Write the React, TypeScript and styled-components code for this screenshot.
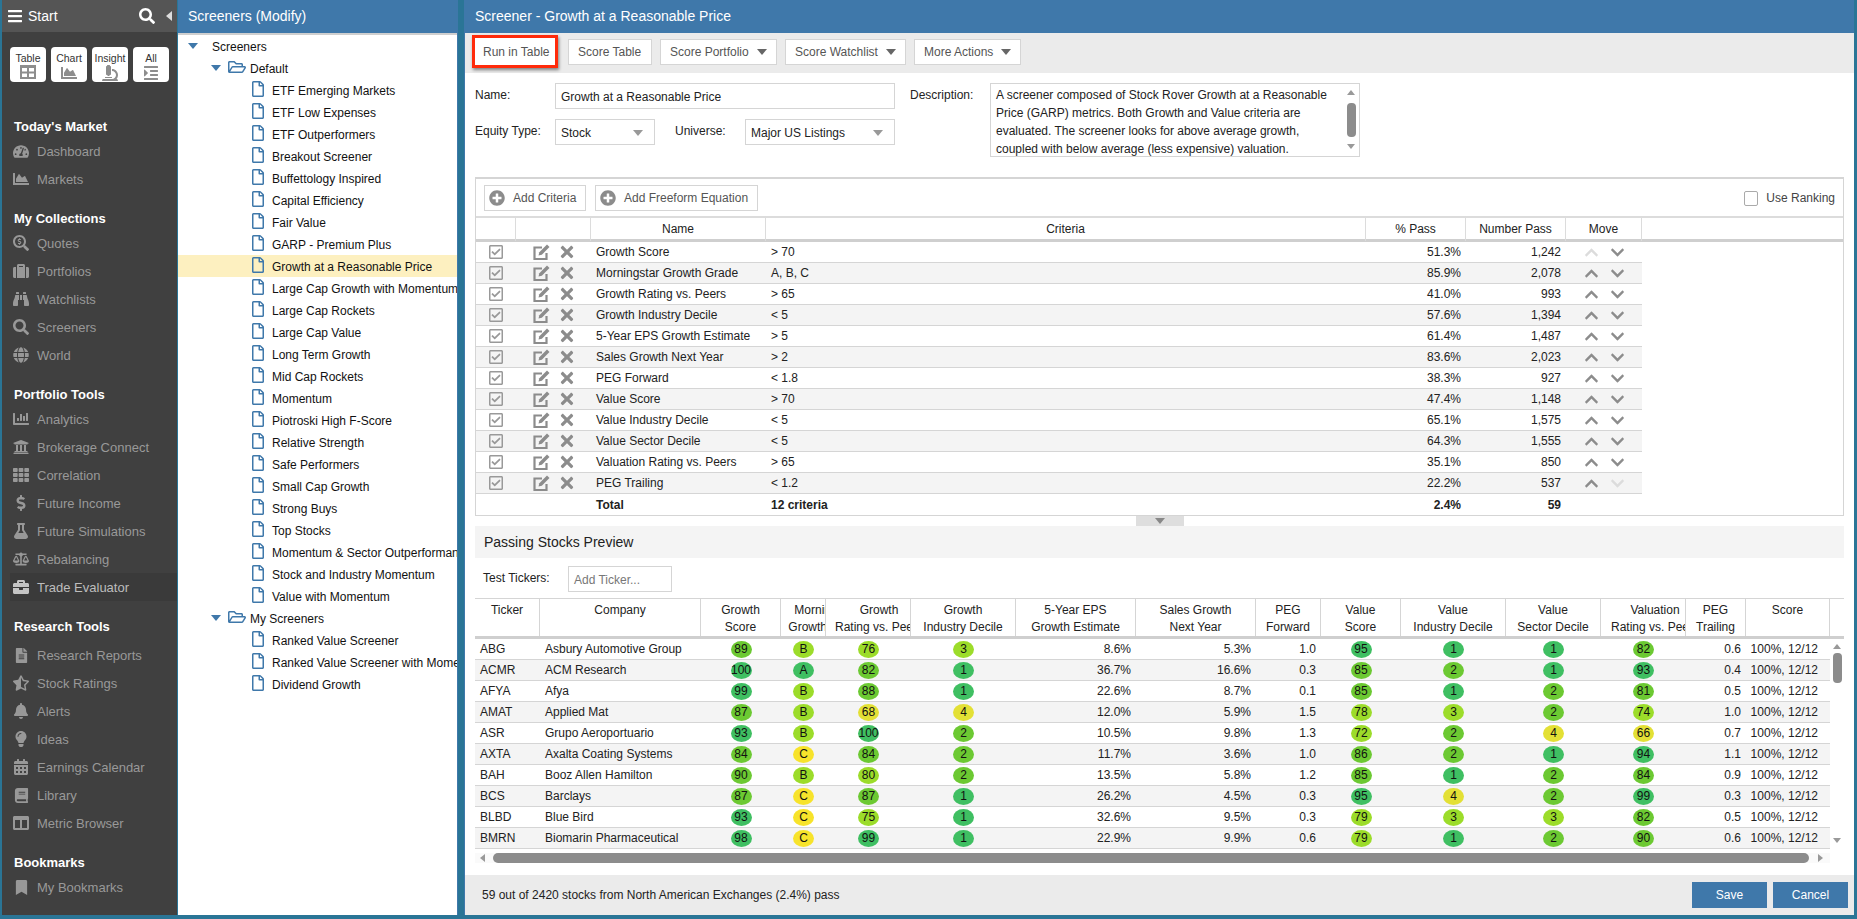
import React from "react";
import styled, { createGlobalStyle } from "styled-components";
import {
  FaBalanceScale,
  FaBars,
  FaBell,
  FaBinoculars,
  FaBook,
  FaBookmark,
  FaBriefcase,
  FaCalendarAlt,
  FaChartArea,
  FaChartBar,
  FaChevronDown,
  FaChevronUp,
  FaColumns,
  FaDollarSign,
  FaFileAlt,
  FaFlask,
  FaGlobe,
  FaIndent,
  FaLightbulb,
  FaMicroscope,
  FaPlusCircle,
  FaRegCheckSquare,
  FaRegFile,
  FaRegFolderOpen,
  FaSearch,
  FaSearchDollar,
  FaStarHalfAlt,
  FaSuitcase,
  FaTachometerAlt,
  FaTh,
  FaTimes,
  FaUniversity,
} from "react-icons/fa";

const BLUE = "#3f78aa";
const TEAL = "#2a7596";
const FONT = `"Liberation Sans", Arial, sans-serif`;

const GlobalStyle = createGlobalStyle`
  html, body {
    margin: 0;
    padding: 0;
    height: 100%;
    overflow: hidden;
  }
  body {
    font-family: ${FONT};
    font-size: 12px;
    color: #222;
    background: ${TEAL};
  }
  * {
    box-sizing: border-box;
  }
`;

const Page = styled.div`
  width: 1857px;
  height: 919px;
  padding: 0 3px 4px 2px;
  background: ${TEAL};
  display: flex;
`;

/* ---------- left navigation ---------- */

const Sidebar = styled.nav`
  width: 175px;
  flex: none;
  background: #404040;
  display: flex;
  flex-direction: column;
  overflow: hidden;
`;

const StartBar = styled.div`
  height: 32px;
  flex: none;
  background: #555555;
  color: #fff;
  display: flex;
  align-items: center;
  padding: 0 5px;
  font-size: 14px;
  svg {
    display: block;
  }
`;

const StartLabel = styled.span`
  margin-left: 5px;
  flex: 1;
`;

const LeftCaret = styled.span`
  width: 0;
  height: 0;
  margin-left: 11px;
  border-top: 5px solid transparent;
  border-bottom: 5px solid transparent;
  border-right: 6px solid #ddd;
`;

const TileRow = styled.div`
  display: flex;
  flex: none;
  gap: 5px;
  padding: 15px 8px 0;
  margin-bottom: 35px;
`;

const Tile = styled.div`
  width: 36px;
  height: 35px;
  background: #fff;
  border-radius: 4px;
  color: #333;
  font-size: 10.5px;
  display: flex;
  flex-direction: column;
  align-items: center;
  padding-top: 5px;
  svg {
    color: #8d8d8d;
    margin-top: 1px;
  }
`;

const NavGroup = styled.div`
  flex: none;
  margin-bottom: 16px;
`;

const NavHeading = styled.div<{ $gap: number }>`
  height: 19px;
  line-height: 19px;
  padding-left: 12px;
  margin-bottom: ${(props) => props.$gap}px;
  font-size: 13px;
  font-weight: 700;
  color: #fff;
`;

const NavItem = styled.div<{ $active?: boolean }>`
  height: 28px;
  display: flex;
  align-items: center;
  margin-left: 8px;
  padding-left: 3px;
  font-size: 13px;
  color: ${(props) => (props.$active ? "#bdbdbd" : "#999")};
  background: ${(props) => (props.$active ? "#3a3a3a" : "transparent")};
`;

const NavIcon = styled.span`
  width: 16px;
  margin-right: 8px;
  display: flex;
  justify-content: center;
  flex: none;
`;

/* ---------- tree panel ---------- */

const TreePanel = styled.aside`
  width: 280px;
  flex: none;
  margin-left: 1px;
  background: #fff;
  border-right: 1px solid ${BLUE};
  overflow: hidden;
`;

const PanelTitle = styled.div`
  height: 33px;
  background: ${BLUE};
  color: #fff;
  font-size: 14px;
  line-height: 33px;
  padding-left: 10px;
`;

const PanelRule = styled.div`
  height: 2px;
  background: #cfcfcf;
`;

const TreeRow = styled.div<{ $depth: number; $selected?: boolean }>`
  height: 22px;
  display: flex;
  align-items: center;
  white-space: nowrap;
  font-size: 12px;
  color: #111;
  padding: 2px 0 0 ${(props) => props.$depth}px;
  background: ${(props) => (props.$selected ? "#fdf0c0" : "transparent")};
`;

const TreeCaret = styled.span`
  width: 0;
  height: 0;
  flex: none;
  margin-top: -2px;
  border-left: 5px solid transparent;
  border-right: 5px solid transparent;
  border-top: 6px solid ${BLUE};
`;

const RootLabel = styled.span`
  margin-left: 14px;
`;

const FolderIcon = styled(FaRegFolderOpen)`
  color: ${BLUE};
  margin: -4px 4px 0 7px;
  flex: none;
`;

const FileIcon = styled(FaRegFile)`
  color: ${BLUE};
  margin: -4px 6px 0 -2px;
  flex: none;
`;

/* ---------- main panel ---------- */

const Main = styled.main`
  width: 1390px;
  flex: none;
  margin-left: 6px;
  background: #fff;
  border-left: 1px solid ${BLUE};
  display: flex;
  flex-direction: column;
`;

const MainTitle = styled.div`
  height: 33px;
  background: ${BLUE};
  color: #fff;
  font-size: 14px;
  line-height: 33px;
  padding-left: 10px;
`;

const ActionBar = styled.div`
  height: 40px;
  background: #ebebeb;
  display: flex;
  align-items: flex-start;
  gap: 8px;
  padding: 6px 0 0 7px;
`;

const ActionButton = styled.div<{ $w: number; $marked?: boolean }>`
  width: ${(props) => props.$w}px;
  height: 26px;
  background: #fff;
  border: 1px solid #d5d5d5;
  color: #555;
  font-size: 12px;
  white-space: nowrap;
  display: flex;
  align-items: center;
  justify-content: space-between;
  padding: 0 9px;
  ${(props) =>
    props.$marked &&
    `
    height: 33px;
    margin: -4px 2px 0 0;
    border: 3px solid #ff2a0a;
    box-shadow: 1px 2px 3px rgba(0,0,0,.45);
    padding: 0 8px;
  `}
`;

const DownTriangle = styled.span<{ $color?: string }>`
  width: 0;
  height: 0;
  flex: none;
  border-left: 5px solid transparent;
  border-right: 5px solid transparent;
  border-top: 6px solid ${(props) => props.$color || "#666"};
`;

const SelectCaret = styled(DownTriangle)`
  margin-right: 6px;
`;

const FormGrid = styled.div`
  height: 74px;
  margin: 10px 0 20px 10px;
  display: flex;
`;

const FormLeft = styled.div`
  width: 420px;
  display: flex;
  flex-direction: column;
  gap: 10px;
`;

const FormLine = styled.div`
  display: flex;
  align-items: flex-start;
`;

const FieldLabel = styled.label<{ $w: number }>`
  width: ${(props) => props.$w}px;
  flex: none;
  font-size: 12px;
  line-height: 25px;
  color: #222;
`;

const UniverseLabel = styled(FieldLabel)`
  margin-left: 20px;
`;

const DescriptionLabel = styled(FieldLabel)`
  margin-left: 15px;
`;

const TextField = styled.div<{ $w: number }>`
  width: ${(props) => props.$w}px;
  height: 26px;
  border: 1px solid #d5d5d5;
  background: #fff;
  padding: 1px 5px 0;
  font-size: 12px;
  color: #222;
  display: flex;
  align-items: center;
  justify-content: space-between;
`;

const DescriptionBox = styled.div`
  width: 370px;
  height: 74px;
  border: 1px solid #d5d5d5;
  display: flex;
  font-size: 12px;
  line-height: 18px;
  padding: 2px 0 0 5px;
  overflow: hidden;
`;

const DescriptionText = styled.div`
  flex: 1;
  padding-right: 8px;
`;

const DescScroll = styled.div`
  width: 12px;
  flex: none;
  display: flex;
  flex-direction: column;
  align-items: center;
  justify-content: space-between;
  margin: 4px 2px 7px 0;
`;

const ScrollThumb = styled.div<{ $h: number }>`
  width: 9px;
  height: ${(props) => props.$h}px;
  background: #8c8c8c;
  border-radius: 4px;
`;

const UpArrow = styled.span`
  width: 0;
  height: 0;
  border-left: 4.5px solid transparent;
  border-right: 4.5px solid transparent;
  border-bottom: 5px solid #999;
`;

const DownArrow = styled.span`
  width: 0;
  height: 0;
  border-left: 4.5px solid transparent;
  border-right: 4.5px solid transparent;
  border-top: 5px solid #999;
`;

const CriteriaBox = styled.section`
  margin-left: 10px;
  width: 1369px;
  height: 339px;
  flex: none;
  border: 1px solid #d5d5d5;
  border-top-width: 2px;
`;

const CriteriaTools = styled.div`
  height: 39px;
  display: flex;
  align-items: center;
  gap: 9px;
  padding: 1px 8px 0;
  border-bottom: 2px solid #dcdcdc;
`;

const AddButton = styled.div<{ $w: number }>`
  width: ${(props) => props.$w}px;
  height: 26px;
  border: 1px solid #d5d5d5;
  color: #555;
  font-size: 12px;
  display: flex;
  align-items: center;
  gap: 8px;
  padding-left: 4px;
  svg {
    color: #8c8c8c;
  }
`;

const RankingToggle = styled.div`
  margin-left: auto;
  display: flex;
  align-items: center;
  gap: 8px;
  font-size: 12px;
  color: #444;
`;

const CheckBox = styled.span`
  width: 14px;
  height: 15px;
  border: 1px solid #aaa;
  border-radius: 2px;
`;

const CRITERIA_COLUMNS = "40px 75px 175px 600px 100px 100px 76px";

const CriteriaHead = styled.div`
  display: grid;
  grid-template-columns: ${CRITERIA_COLUMNS} 1fr;
  height: 24px;
  border-bottom: 3px solid #cfcfcf;
`;

const CriteriaHeadCell = styled.div`
  border-right: 1px solid #dcdcdc;
  text-align: center;
  font-size: 12px;
  line-height: 23px;
  color: #222;
  &:last-child {
    border-right: 0;
  }
`;

const CriteriaRow = styled.div<{ $shade?: boolean }>`
  display: grid;
  grid-template-columns: ${CRITERIA_COLUMNS};
  width: 1166px;
  height: 21px;
  align-items: center;
  font-size: 12px;
  color: #222;
  border-bottom: 1px solid #d5d5d5;
  background: ${(props) => (props.$shade ? "#f4f4f4" : "#fff")};
`;

const TotalRow = styled(CriteriaRow)`
  border-bottom: 0;
  font-weight: 700;
`;

const CheckCell = styled.div`
  padding-left: 12px;
  display: flex;
  color: #999;
`;

const EditCell = styled.div`
  padding-left: 17px;
  display: flex;
  align-items: center;
  gap: 7px;
  color: #8c8c8c;
`;

const NameCell = styled.div`
  padding-left: 5px;
`;

const NumCell = styled.div`
  text-align: right;
  padding-right: 5px;
`;

const MoveCell = styled.div`
  display: flex;
  align-items: center;
  gap: 11px;
  padding-left: 18px;
`;

const Chevron = styled.span<{ $off?: boolean }>`
  display: flex;
  color: ${(props) => (props.$off ? "#dcdcdc" : "#8c8c8c")};
`;

const Splitter = styled.div`
  height: 10px;
  display: flex;
  justify-content: center;
`;

const SplitHandle = styled.div`
  width: 48px;
  height: 10px;
  background: #dedede;
  display: flex;
  align-items: center;
  justify-content: center;
`;

const PreviewTitle = styled.div`
  margin-left: 10px;
  width: 1369px;
  height: 32px;
  flex: none;
  background: #f4f4f4;
  padding-left: 9px;
  font-size: 14px;
  line-height: 32px;
  color: #222;
`;

const TickerLine = styled.div`
  height: 40px;
  flex: none;
  margin-left: 18px;
  display: flex;
  align-items: flex-start;
  padding-top: 8px;
`;

const TickerInput = styled.div`
  width: 104px;
  height: 26px;
  border: 1px solid #d5d5d5;
  padding-left: 5px;
  font-size: 12px;
  line-height: 26px;
  color: #777;
`;

const PREVIEW_COLUMNS =
  "65px 161px 80px 45px 85px 105px 120px 120px 65px 80px 105px 95px 85px 60px 84px";

const PreviewHead = styled.div`
  margin-left: 10px;
  width: 1369px;
  display: grid;
  grid-template-columns: ${PREVIEW_COLUMNS} 1fr;
  height: 41px;
  flex: none;
  border-top: 1px solid #d5d5d5;
  border-bottom: 3px solid #cfcfcf;
`;

const PreviewHeadCell = styled.div`
  border-right: 1px solid #d5d5d5;
  overflow: hidden;
  &:last-child {
    border-right: 0;
  }
`;

const HeadLabel = styled.div<{ $w?: number }>`
  width: ${(props) => (props.$w ? `${props.$w}px` : "100%")};
  text-align: center;
  font-size: 12px;
  line-height: 17px;
  padding-top: 3px;
  white-space: nowrap;
  color: #222;
`;

const PreviewBody = styled.div`
  margin-left: 10px;
  width: 1369px;
  display: flex;
  flex: none;
`;

const RowStack = styled.div`
  width: 1355px;
`;

const StockRow = styled.div<{ $shade?: boolean }>`
  display: grid;
  grid-template-columns: ${PREVIEW_COLUMNS};
  height: 21px;
  align-items: center;
  font-size: 12px;
  color: #222;
  border-bottom: 1px solid #d5d5d5;
  background: ${(props) => (props.$shade ? "#f4f4f4" : "#fff")};
`;

const TickerCell = styled.div`
  padding-left: 5px;
`;

const CompanyCell = styled.div`
  padding-left: 5px;
  white-space: nowrap;
`;

const BallCell = styled.div`
  display: flex;
  justify-content: center;
`;

const Ball = styled.span<{ $color: string }>`
  width: 21px;
  height: 17px;
  border-radius: 50%;
  background: ${(props) => props.$color};
  color: #111;
  font-size: 12px;
  line-height: 17px;
  text-align: center;
`;

const StockScore = styled.div`
  text-align: right;
  padding-right: 12px;
  white-space: nowrap;
`;

const VScroll = styled.div`
  width: 14px;
  height: 210px;
  display: flex;
  flex-direction: column;
  align-items: center;
  padding: 5px 0 6px;
`;

const VThumb = styled(ScrollThumb)`
  margin-top: 4px;
  margin-bottom: auto;
`;

const HScroll = styled.div`
  margin: 4px 0 0 10px;
  width: 1355px;
  height: 10px;
  flex: none;
  display: flex;
  align-items: center;
  background: #fafafa;
  padding: 0 7px 0 5px;
`;

const HThumb = styled.div`
  flex: 1;
  height: 10px;
  background: #8c8c8c;
  border-radius: 5px;
  margin: 0 9px 0 8px;
`;

const ArrowLeft = styled.span`
  width: 0;
  height: 0;
  border-top: 4px solid transparent;
  border-bottom: 4px solid transparent;
  border-right: 5px solid #999;
`;

const ArrowRight = styled.span`
  width: 0;
  height: 0;
  border-top: 4px solid transparent;
  border-bottom: 4px solid transparent;
  border-left: 5px solid #999;
`;

const Footer = styled.footer`
  margin-top: auto;
  height: 40px;
  background: #ebebeb;
  display: flex;
  align-items: center;
  padding: 0 6px 0 17px;
  font-size: 12px;
  color: #222;
`;

const FooterText = styled.span`
  flex: 1;
`;

const FooterButton = styled.div`
  width: 75px;
  height: 26px;
  margin-left: 6px;
  background: ${BLUE};
  color: #fff;
  font-size: 12px;
  line-height: 26px;
  text-align: center;
`;

/* ---------- drawn icons ---------- */

const TableGlyph = () => (
  <svg width="16" height="14" viewBox="0 0 16 14">
    <rect x="0" y="0" width="16" height="14" fill="currentColor" />
    <rect x="2" y="3" width="5" height="3.5" fill="#fff" />
    <rect x="9" y="3" width="5" height="3.5" fill="#fff" />
    <rect x="2" y="8.5" width="5" height="3.5" fill="#fff" />
    <rect x="9" y="8.5" width="5" height="3.5" fill="#fff" />
  </svg>
);

const EditGlyph = () => (
  <svg width="18" height="18" viewBox="0 0 18 18">
    <path d="M13.5 10v6H1.5V4.5H9" fill="none" stroke="currentColor" strokeWidth="2.2" />
    <path d="M5.5 12.5l.8-3.3L14 1.5l2.5 2.5-7.7 7.7z" fill="currentColor" />
  </svg>
);

/* ---------- data ---------- */

type NavEntry = { label: string; icon: React.ReactNode; active?: boolean };
type NavSection = { title: string; gap: number; items: NavEntry[] };

const navIcon = { color: "#989898" };

const navSections: NavSection[] = [
  {
    title: "Today's Market",
    gap: 1,
    items: [
      { label: "Dashboard", icon: <FaTachometerAlt {...navIcon} size={17} /> },
      { label: "Markets", icon: <FaChartArea {...navIcon} size={16} /> },
    ],
  },
  {
    title: "My Collections",
    gap: 1,
    items: [
      { label: "Quotes", icon: <FaSearchDollar {...navIcon} size={16} /> },
      { label: "Portfolios", icon: <FaSuitcase {...navIcon} size={16} /> },
      { label: "Watchlists", icon: <FaBinoculars {...navIcon} size={16} /> },
      { label: "Screeners", icon: <FaSearch {...navIcon} size={16} /> },
      { label: "World", icon: <FaGlobe {...navIcon} size={16} /> },
    ],
  },
  {
    title: "Portfolio Tools",
    gap: 1,
    items: [
      { label: "Analytics", icon: <FaChartBar {...navIcon} size={16} /> },
      { label: "Brokerage Connect", icon: <FaUniversity {...navIcon} size={16} /> },
      { label: "Correlation", icon: <FaTh {...navIcon} size={16} /> },
      { label: "Future Income", icon: <FaDollarSign {...navIcon} size={16} /> },
      { label: "Future Simulations", icon: <FaFlask {...navIcon} size={16} /> },
      { label: "Rebalancing", icon: <FaBalanceScale {...navIcon} size={18} /> },
      { label: "Trade Evaluator", icon: <FaBriefcase size={16} color="#c4c4c4" />, active: true },
    ],
  },
  {
    title: "Research Tools",
    gap: 5,
    items: [
      { label: "Research Reports", icon: <FaFileAlt {...navIcon} size={15} /> },
      { label: "Stock Ratings", icon: <FaStarHalfAlt {...navIcon} size={16} /> },
      { label: "Alerts", icon: <FaBell {...navIcon} size={16} /> },
      { label: "Ideas", icon: <FaLightbulb {...navIcon} size={16} /> },
      { label: "Earnings Calendar", icon: <FaCalendarAlt {...navIcon} size={16} /> },
      { label: "Library", icon: <FaBook {...navIcon} size={15} /> },
      { label: "Metric Browser", icon: <FaColumns {...navIcon} size={16} /> },
    ],
  },
  {
    title: "Bookmarks",
    gap: 1,
    items: [{ label: "My Bookmarks", icon: <FaBookmark {...navIcon} size={15} /> }],
  },
];

const defaultScreeners = [
  "ETF Emerging Markets",
  "ETF Low Expenses",
  "ETF Outperformers",
  "Breakout Screener",
  "Buffettology Inspired",
  "Capital Efficiency",
  "Fair Value",
  "GARP - Premium Plus",
  "Growth at a Reasonable Price",
  "Large Cap Growth with Momentum",
  "Large Cap Rockets",
  "Large Cap Value",
  "Long Term Growth",
  "Mid Cap Rockets",
  "Momentum",
  "Piotroski High F-Score",
  "Relative Strength",
  "Safe Performers",
  "Small Cap Growth",
  "Strong Buys",
  "Top Stocks",
  "Momentum & Sector Outperformance",
  "Stock and Industry Momentum",
  "Value with Momentum",
];

const myScreeners = ["Ranked Value Screener", "Ranked Value Screener with Momentum", "Dividend Growth"];

const criteria = [
  ["Growth Score", "> 70", "51.3%", "1,242"],
  ["Morningstar Growth Grade", "A, B, C", "85.9%", "2,078"],
  ["Growth Rating vs. Peers", "> 65", "41.0%", "993"],
  ["Growth Industry Decile", "< 5", "57.6%", "1,394"],
  ["5-Year EPS Growth Estimate", "> 5", "61.4%", "1,487"],
  ["Sales Growth Next Year", "> 2", "83.6%", "2,023"],
  ["PEG Forward", "< 1.8", "38.3%", "927"],
  ["Value Score", "> 70", "47.4%", "1,148"],
  ["Value Industry Decile", "< 5", "65.1%", "1,575"],
  ["Value Sector Decile", "< 5", "64.3%", "1,555"],
  ["Valuation Rating vs. Peers", "> 65", "35.1%", "850"],
  ["PEG Trailing", "< 1.2", "22.2%", "537"],
];

// the narrow columns keep a wider label that the column clips
const previewHeads: { top: string; bottom: string; labelWidth?: number }[] = [
  { top: "Ticker", bottom: "" },
  { top: "Company", bottom: "" },
  { top: "Growth", bottom: "Score" },
  { top: "Morningstar", bottom: "Growth Grade", labelWidth: 90 },
  { top: "Growth", bottom: "Rating vs. Peers", labelWidth: 106 },
  { top: "Growth", bottom: "Industry Decile" },
  { top: "5-Year EPS", bottom: "Growth Estimate" },
  { top: "Sales Growth", bottom: "Next Year" },
  { top: "PEG", bottom: "Forward" },
  { top: "Value", bottom: "Score" },
  { top: "Value", bottom: "Industry Decile" },
  { top: "Value", bottom: "Sector Decile" },
  { top: "Valuation", bottom: "Rating vs. Peers", labelWidth: 108 },
  { top: "PEG", bottom: "Trailing" },
  { top: "Score", bottom: "" },
  { top: "", bottom: "" },
];

type Stock = [string, string, number, string, number, number, string, string, string, number, number, number, number, string];

const stocks: Stock[] = [
  ["ABG", "Asbury Automotive Group", 89, "B", 76, 3, "8.6%", "5.3%", "1.0", 95, 1, 1, 82, "0.6"],
  ["ACMR", "ACM Research", 100, "A", 82, 1, "36.7%", "16.6%", "0.3", 85, 2, 1, 93, "0.4"],
  ["AFYA", "Afya", 99, "B", 88, 1, "22.6%", "8.7%", "0.1", 85, 1, 2, 81, "0.5"],
  ["AMAT", "Applied Mat", 87, "B", 68, 4, "12.0%", "5.9%", "1.5", 78, 3, 2, 74, "1.0"],
  ["ASR", "Grupo Aeroportuario", 93, "B", 100, 2, "10.5%", "9.8%", "1.3", 72, 2, 4, 66, "0.7"],
  ["AXTA", "Axalta Coating Systems", 84, "C", 84, 2, "11.7%", "3.6%", "1.0", 86, 2, 1, 94, "1.1"],
  ["BAH", "Booz Allen Hamilton", 90, "B", 80, 2, "13.5%", "5.8%", "1.2", 85, 1, 2, 84, "0.9"],
  ["BCS", "Barclays", 87, "C", 87, 1, "26.2%", "4.5%", "0.3", 95, 4, 2, 99, "0.3"],
  ["BLBD", "Blue Bird", 93, "C", 75, 1, "32.6%", "9.5%", "0.3", 79, 3, 3, 82, "0.5"],
  ["BMRN", "Biomarin Pharmaceutical", 98, "C", 99, 1, "22.9%", "9.9%", "0.6", 79, 1, 2, 90, "0.6"],
];

const DARK_GREEN = "#3fbf62";
const GREEN = "#6cc932";
const LIME = "#9cdc2a";
const OLIVE = "#e3e035";
const YELLOW = "#f7e32b";

const scoreColor = (score: number) => {
  if (score > 90) return DARK_GREEN;
  if (score > 80) return GREEN;
  if (score >= 70) return LIME;
  return OLIVE;
};

const decileColor = (decile: number) => [DARK_GREEN, GREEN, LIME, OLIVE][decile - 1];

const gradeColor = (grade: string) => (grade === "A" ? DARK_GREEN : grade === "B" ? LIME : YELLOW);

const App: React.FC = () => {
  return (
    <Page>
      <GlobalStyle />
      <Sidebar>
        <StartBar>
          <FaBars size={16} />
          <StartLabel>Start</StartLabel>
          <FaSearch size={16} />
          <LeftCaret />
        </StartBar>
        <TileRow>
          <Tile>
            Table
            <TableGlyph />
          </Tile>
          <Tile>
            Chart
            <FaChartArea size={16} />
          </Tile>
          <Tile>
            Insight
            <FaMicroscope size={16} />
          </Tile>
          <Tile>
            All
            <FaIndent size={16} />
          </Tile>
        </TileRow>
        {navSections.map((section) => (
          <NavGroup key={section.title}>
            <NavHeading $gap={section.gap}>{section.title}</NavHeading>
            {section.items.map((item) => (
              <NavItem key={item.label} $active={item.active}>
                <NavIcon>{item.icon}</NavIcon>
                {item.label}
              </NavItem>
            ))}
          </NavGroup>
        ))}
      </Sidebar>

      <TreePanel>
        <PanelTitle>Screeners (Modify)</PanelTitle>
        <PanelRule />
        <TreeRow $depth={10}>
          <TreeCaret />
          <RootLabel>Screeners</RootLabel>
        </TreeRow>
        <TreeRow $depth={33}>
          <TreeCaret />
          <FolderIcon size={18} />
          Default
        </TreeRow>
        {defaultScreeners.map((name) => (
          <TreeRow key={name} $depth={74} $selected={name === "Growth at a Reasonable Price"}>
            <FileIcon size={16} />
            {name}
          </TreeRow>
        ))}
        <TreeRow $depth={33}>
          <TreeCaret />
          <FolderIcon size={18} />
          My Screeners
        </TreeRow>
        {myScreeners.map((name) => (
          <TreeRow key={name} $depth={74}>
            <FileIcon size={16} />
            {name}
          </TreeRow>
        ))}
      </TreePanel>

      <Main>
        <MainTitle>Screener - Growth at a Reasonable Price</MainTitle>
        <ActionBar>
          <ActionButton $w={86} $marked>
            Run in Table
          </ActionButton>
          <ActionButton $w={84}>Score Table</ActionButton>
          <ActionButton $w={117}>
            Score Portfolio <DownTriangle />
          </ActionButton>
          <ActionButton $w={121}>
            Score Watchlist <DownTriangle />
          </ActionButton>
          <ActionButton $w={107}>
            More Actions <DownTriangle />
          </ActionButton>
        </ActionBar>

        <FormGrid>
          <FormLeft>
            <FormLine>
              <FieldLabel $w={80}>Name:</FieldLabel>
              <TextField $w={340}>Growth at a Reasonable Price</TextField>
            </FormLine>
            <FormLine>
              <FieldLabel $w={80}>Equity Type:</FieldLabel>
              <TextField $w={100}>
                Stock <SelectCaret $color="#999" />
              </TextField>
              <UniverseLabel $w={70}>Universe:</UniverseLabel>
              <TextField $w={150}>
                Major US Listings <SelectCaret $color="#999" />
              </TextField>
            </FormLine>
          </FormLeft>
          <DescriptionLabel $w={80}>Description:</DescriptionLabel>
          <DescriptionBox>
            <DescriptionText>
              A screener composed of Stock Rover Growth at a Reasonable Price (GARP) metrics. Both Growth and Value
              criteria are evaluated. The screener looks for above average growth, coupled with below average (less
              expensive) valuation.
            </DescriptionText>
            <DescScroll>
              <UpArrow />
              <ScrollThumb $h={34} />
              <DownArrow />
            </DescScroll>
          </DescriptionBox>
        </FormGrid>

        <CriteriaBox>
          <CriteriaTools>
            <AddButton $w={102}>
              <FaPlusCircle size={16} /> Add Criteria
            </AddButton>
            <AddButton $w={163}>
              <FaPlusCircle size={16} /> Add Freeform Equation
            </AddButton>
            <RankingToggle>
              <CheckBox />
              Use Ranking
            </RankingToggle>
          </CriteriaTools>
          <CriteriaHead>
            <CriteriaHeadCell />
            <CriteriaHeadCell />
            <CriteriaHeadCell>Name</CriteriaHeadCell>
            <CriteriaHeadCell>Criteria</CriteriaHeadCell>
            <CriteriaHeadCell>% Pass</CriteriaHeadCell>
            <CriteriaHeadCell>Number Pass</CriteriaHeadCell>
            <CriteriaHeadCell>Move</CriteriaHeadCell>
            <CriteriaHeadCell />
          </CriteriaHead>
          {criteria.map(([name, rule, pass, count], i) => (
            <CriteriaRow key={name} $shade={i % 2 === 1}>
              <CheckCell>
                <FaRegCheckSquare size={16} />
              </CheckCell>
              <EditCell>
                <EditGlyph />
                <FaTimes size={18} />
              </EditCell>
              <NameCell>{name}</NameCell>
              <NameCell>{rule}</NameCell>
              <NumCell>{pass}</NumCell>
              <NumCell>{count}</NumCell>
              <MoveCell>
                <Chevron $off={i === 0}>
                  <FaChevronUp size={15} />
                </Chevron>
                <Chevron $off={i === criteria.length - 1}>
                  <FaChevronDown size={15} />
                </Chevron>
              </MoveCell>
            </CriteriaRow>
          ))}
          <TotalRow>
            <div />
            <div />
            <NameCell>Total</NameCell>
            <NameCell>12 criteria</NameCell>
            <NumCell>2.4%</NumCell>
            <NumCell>59</NumCell>
          </TotalRow>
        </CriteriaBox>

        <Splitter>
          <SplitHandle>
            <DownTriangle $color="#888" />
          </SplitHandle>
        </Splitter>
        <PreviewTitle>Passing Stocks Preview</PreviewTitle>
        <TickerLine>
          <FieldLabel $w={85}>Test Tickers:</FieldLabel>
          <TickerInput>Add Ticker...</TickerInput>
        </TickerLine>
        <PreviewHead>
          {previewHeads.map((head, i) => (
            <PreviewHeadCell key={i}>
              <HeadLabel $w={head.labelWidth}>
                {head.top}
                <br />
                {head.bottom}
              </HeadLabel>
            </PreviewHeadCell>
          ))}
        </PreviewHead>
        <PreviewBody>
          <RowStack>
            {stocks.map((s, i) => (
              <StockRow key={s[0]} $shade={i % 2 === 1}>
                <TickerCell>{s[0]}</TickerCell>
                <CompanyCell>{s[1]}</CompanyCell>
                <BallCell>
                  <Ball $color={scoreColor(s[2])}>{s[2]}</Ball>
                </BallCell>
                <BallCell>
                  <Ball $color={gradeColor(s[3])}>{s[3]}</Ball>
                </BallCell>
                <BallCell>
                  <Ball $color={scoreColor(s[4])}>{s[4]}</Ball>
                </BallCell>
                <BallCell>
                  <Ball $color={decileColor(s[5])}>{s[5]}</Ball>
                </BallCell>
                <NumCell>{s[6]}</NumCell>
                <NumCell>{s[7]}</NumCell>
                <NumCell>{s[8]}</NumCell>
                <BallCell>
                  <Ball $color={scoreColor(s[9])}>{s[9]}</Ball>
                </BallCell>
                <BallCell>
                  <Ball $color={decileColor(s[10])}>{s[10]}</Ball>
                </BallCell>
                <BallCell>
                  <Ball $color={decileColor(s[11])}>{s[11]}</Ball>
                </BallCell>
                <BallCell>
                  <Ball $color={scoreColor(s[12])}>{s[12]}</Ball>
                </BallCell>
                <NumCell>{s[13]}</NumCell>
                <StockScore>100%, 12/12</StockScore>
              </StockRow>
            ))}
          </RowStack>
          <VScroll>
            <UpArrow />
            <VThumb $h={30} />
            <DownArrow />
          </VScroll>
        </PreviewBody>
        <HScroll>
          <ArrowLeft />
          <HThumb />
          <ArrowRight />
        </HScroll>
        <Footer>
          <FooterText>59 out of 2420 stocks from North American Exchanges (2.4%) pass</FooterText>
          <FooterButton>Save</FooterButton>
          <FooterButton>Cancel</FooterButton>
        </Footer>
      </Main>
    </Page>
  );
};

export default App;
